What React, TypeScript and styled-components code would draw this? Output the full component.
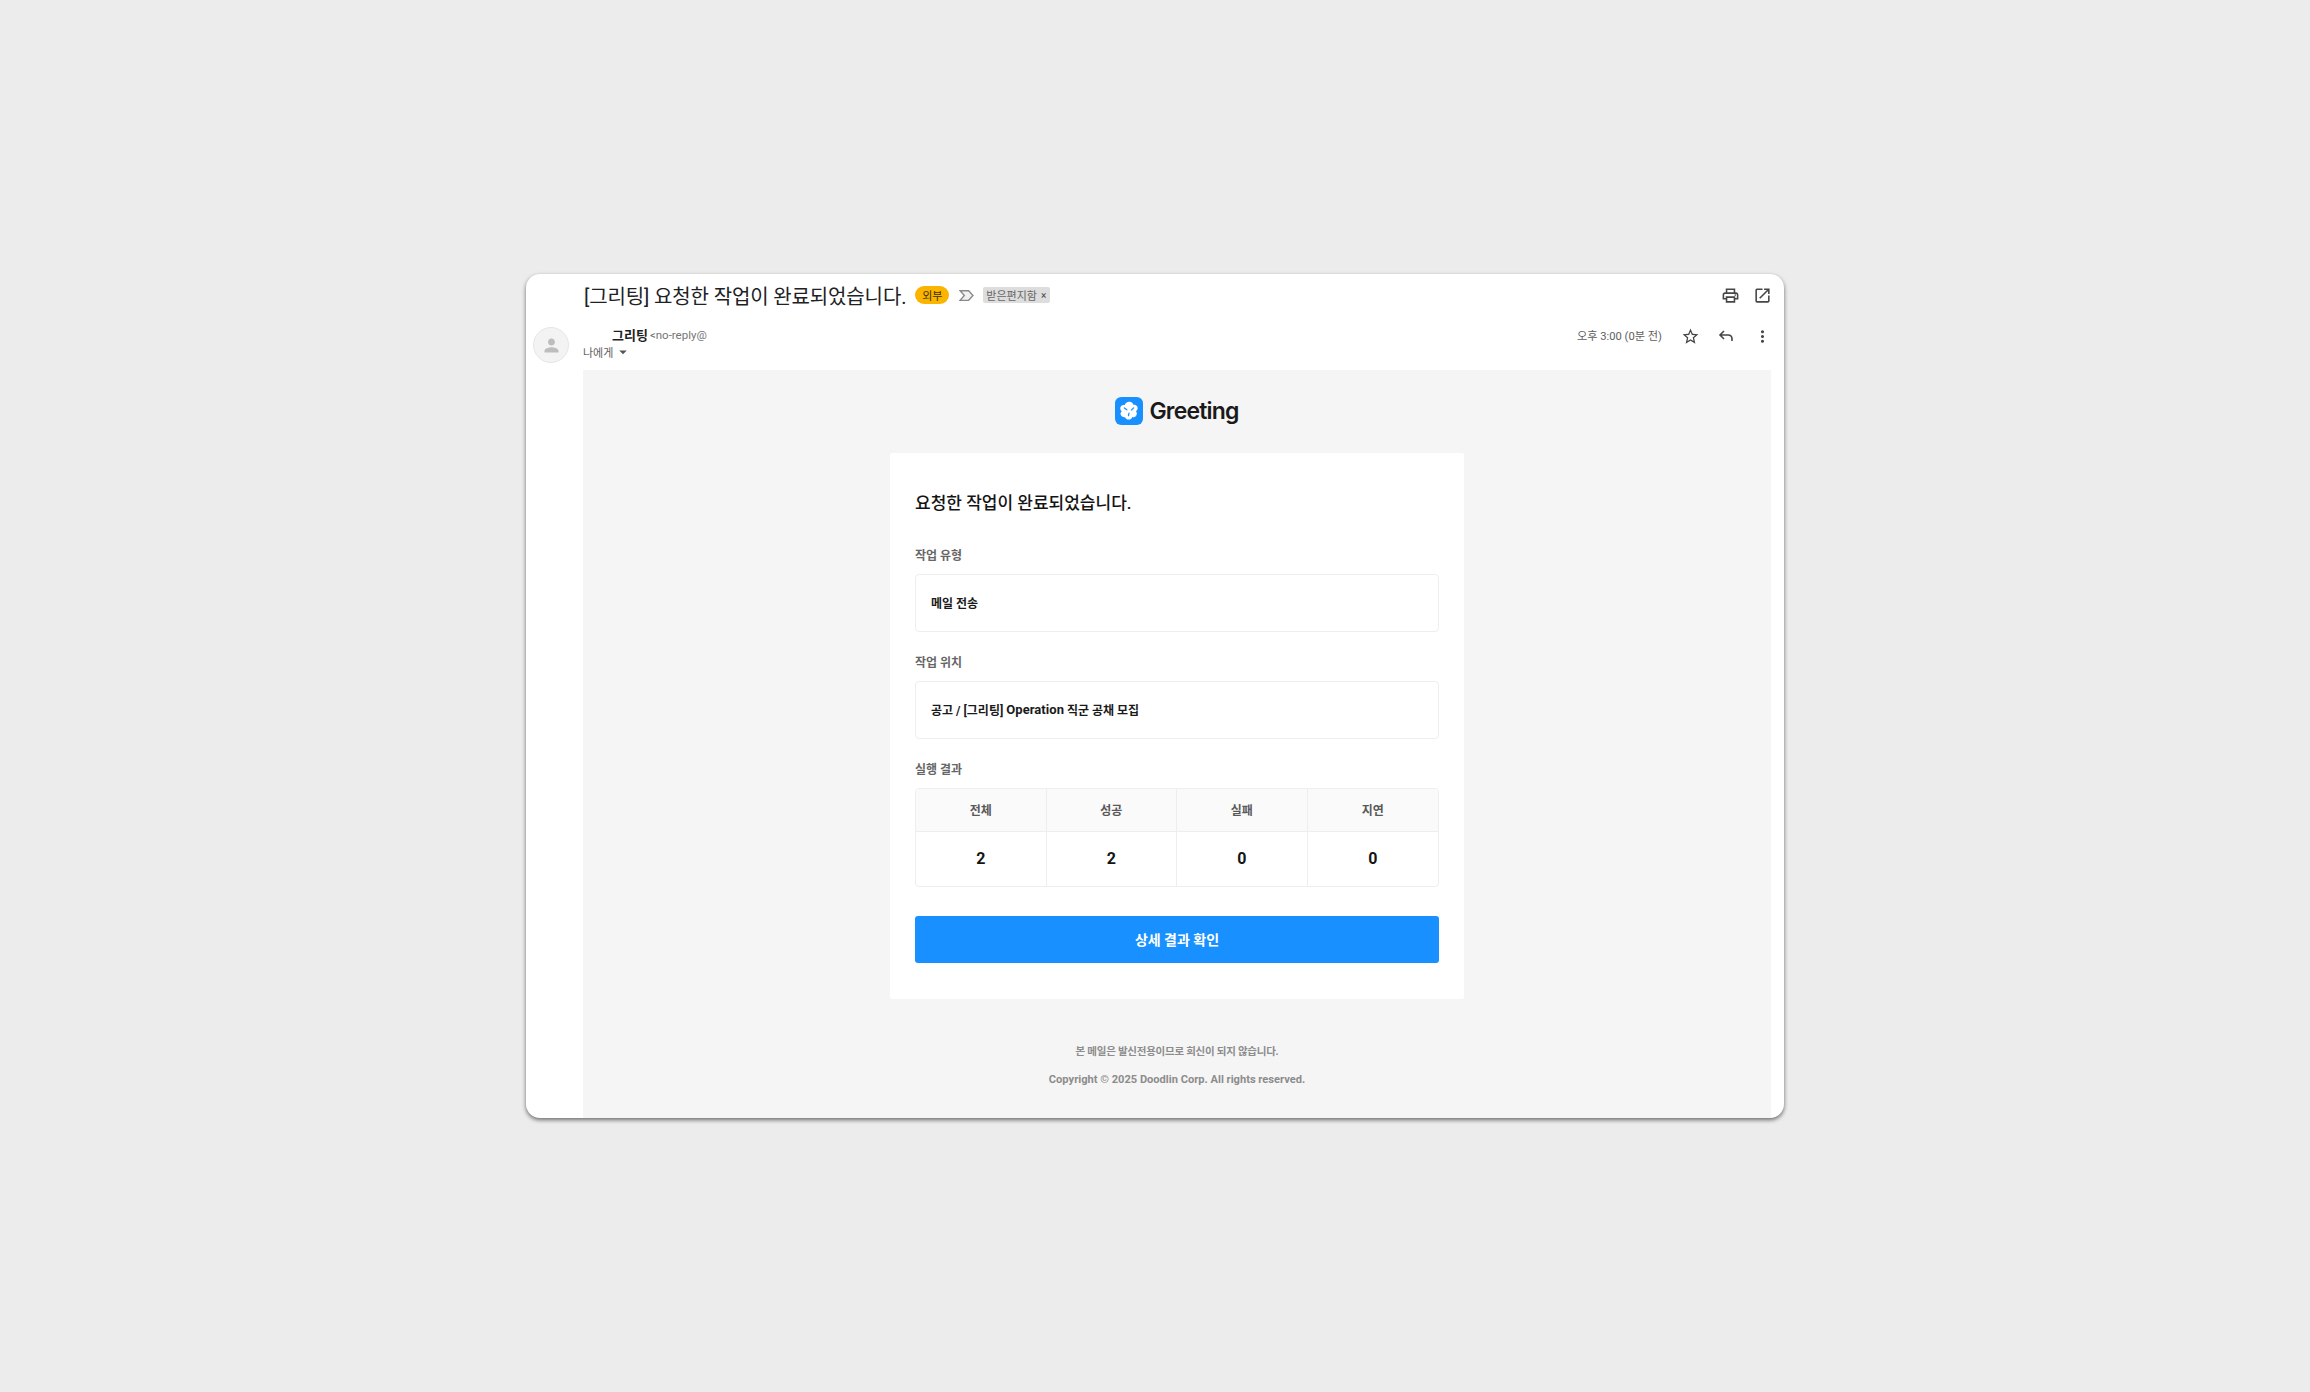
import React from "react";
import styled, { createGlobalStyle } from "styled-components";
import { MdOutlinePrint, MdOpenInNew, MdStarBorder, MdMoreVert, MdArrowDropDown, MdPerson } from "react-icons/md";

const Global = createGlobalStyle`
  html, body { margin: 0; padding: 0; }
  body { background: #ececec; font-family: Roboto, "Noto Sans CJK KR", sans-serif; }
  * { box-sizing: border-box; }
`;

const Page = styled.div`
  width: 2310px;
  height: 1392px;
  display: flex;
  align-items: center;
  justify-content: center;
  background: #ececec;
`;

const Window = styled.div`
  width: 1258px;
  height: 844px;
  background: #fff;
  border-radius: 14px;
  box-shadow: 0 2px 4px rgba(0, 0, 0, 0.55);
  display: flex;
  flex-direction: column;
  overflow: hidden;
`;

const TitleRow = styled.div`
  height: 42px;
  flex: none;
  display: flex;
  align-items: center;
  padding: 0 11px 0 58px;
`;

const Subject = styled.h1`
  margin: 0;
  font-size: 20px;
  letter-spacing: -0.13px;
  font-weight: 400;
  color: #202124;
  white-space: nowrap;
`;

const ExternalBadge = styled.span`
  width: 34px;
  height: 18px;
  margin-left: 9px;
  border-radius: 9px;
  background: #fbb500;
  color: #3c3000;
  font-size: 11px;
  display: flex;
  align-items: center;
  justify-content: center;
`;

const MarkerIcon = styled.svg`
  width: 15px;
  height: 15px;
  margin-left: 10px;
  flex: none;
`;

const Chip = styled.span`
  height: 16px;
  margin-left: 9px;
  padding: 0 4px 0 3px;
  border-radius: 2px;
  background: #dddddd;
  color: #666;
  font-size: 11px;
  display: flex;
  align-items: center;
  gap: 4px;
  white-space: nowrap;
`;

const ChipClose = styled.span`
  font-size: 10px;
  color: #444;
`;

const Spacer = styled.div`
  flex: 1;
`;

const IconGroup = styled.div<{ $gap: number }>`
  display: flex;
  align-items: center;
  gap: ${(p) => p.$gap}px;
  color: #444746;
  font-size: 19px;
`;

const TitleIcons = styled(IconGroup)`
  padding-top: 1px;
`;

const IconCell = styled.span<{ $w: number }>`
  width: ${(p) => p.$w}px;
  display: flex;
  justify-content: center;
`;

const Body = styled.div`
  flex: 1;
  min-height: 0;
  display: flex;
`;

const AvatarColumn = styled.div`
  width: 57px;
  flex: none;
  padding: 11px 0 0 7px;
`;

const Avatar = styled.div`
  width: 36px;
  height: 36px;
  border-radius: 50%;
  background: #f3f3f3;
  border: 1px solid #e6e6e6;
  color: #bdbdbd;
  font-size: 21px;
  display: flex;
  align-items: center;
  justify-content: center;
`;

const MainColumn = styled.div`
  flex: 1;
  min-width: 0;
  margin-right: 13px;
  display: flex;
  flex-direction: column;
`;

const SenderRow = styled.div`
  height: 54px;
  flex: none;
  display: flex;
  align-items: flex-start;
`;

const SenderInfo = styled.div`
  display: flex;
  flex-direction: column;
  padding-top: 10px;
`;

const SenderLine = styled.div`
  height: 16px;
  padding-left: 29px;
  display: flex;
  align-items: center;
  gap: 2px;
`;

const SenderName = styled.span`
  font-size: 13px;
  font-weight: 700;
  color: #1f1f1f;
`;

const SenderAddress = styled.span`
  font-size: 11.5px;
  padding-top: 1px;
  color: #757575;
`;

const RecipientLine = styled.div`
  height: 16px;
  margin-top: 2px;
  display: flex;
  align-items: center;
  font-size: 11px;
  color: #5e5e5e;
`;

const Caret = styled.span`
  margin-left: 1px;
  font-size: 18px;
  display: flex;
  color: #555;
`;

const TimeRow = styled.div`
  margin-left: auto;
  padding-top: 4px;
  display: flex;
  align-items: center;
  height: 36px;
  margin-right: -2px;
`;

const TimeText = styled.span`
  font-size: 11.2px;
  color: #5e5e5e;
  margin-right: 17px;
  padding-bottom: 3px;
`;

const Panel = styled.div`
  flex: 1;
  min-height: 0;
  background: #f5f5f5;
  padding-top: 27px;
  display: flex;
  flex-direction: column;
  align-items: center;
`;

const Logo = styled.div`
  height: 28px;
  margin-bottom: -1px;
  display: flex;
  align-items: center;
  gap: 6px;
`;

const LogoText = styled.span`
  font-family: Inter, sans-serif;
  font-size: 23px;
  font-weight: 600;
  letter-spacing: -0.8px;
  color: #1a1a1a;
`;

const Card = styled.div`
  width: 574px;
  margin-top: 29px;
  padding: 38px 25px 36px;
  background: #fff;
  border-radius: 2px;
  display: flex;
  flex-direction: column;
`;

const Heading = styled.h2`
  margin: 0;
  font-size: 17px;
  line-height: 24px;
  font-weight: 500;
  color: #141414;
`;

const FieldLabel = styled.div<{ $top: number }>`
  margin-top: ${(p) => p.$top}px;
  height: 16px;
  padding-top: 1px;
  font-size: 12px;
  line-height: 16px;
  font-weight: 700;
  color: #666;
`;

const ValueBox = styled.div`
  margin-top: 11px;
  height: 58px;
  padding: 0 15px 2px;
  border: 1px solid #eeeeee;
  border-radius: 4px;
  display: flex;
  align-items: center;
  white-space: pre;
  font-size: 12px;
  font-weight: 700;
  color: #1a1a1a;
`;

const LatinRun = styled.span`
  font-size: 13px;
  letter-spacing: 0.05px;
`;

const ResultTable = styled.div`
  margin-top: 11px;
  height: 99px;
  border: 1px solid #eeeeee;
  border-radius: 4px;
  display: grid;
  grid-template-columns: repeat(4, 1fr);
  grid-template-rows: 43px 1fr;
  overflow: hidden;
`;

const HeadCell = styled.div<{ $last: boolean }>`
  background: #fafafa;
  border-bottom: 1px solid #eeeeee;
  border-right: ${(p) => (p.$last ? "0" : "1px solid #eeeeee")};
  padding-bottom: 2px;
  display: flex;
  align-items: center;
  justify-content: center;
  font-size: 12px;
  font-weight: 700;
  color: #595959;
`;

const ValueCell = styled.div<{ $last: boolean }>`
  border-right: ${(p) => (p.$last ? "0" : "1px solid #eeeeee")};
  padding-bottom: 1px;
  display: flex;
  align-items: center;
  justify-content: center;
  font-size: 16px;
  font-weight: 700;
  color: #141414;
`;

const ActionButton = styled.a`
  margin-top: 29px;
  height: 47px;
  padding-bottom: 2px;
  background: #1890ff;
  border-radius: 3px;
  color: #fff;
  font-size: 14px;
  font-weight: 700;
  display: flex;
  align-items: center;
  justify-content: center;
`;

const FooterNote = styled.div`
  margin-top: 45px;
  font-size: 10.5px;
  letter-spacing: -0.25px;
  line-height: 16px;
  font-weight: 700;
  color: #8c8c8c;
`;

const FooterCopy = styled.div`
  margin-top: 12px;
  font-size: 11.1px;
  line-height: 16px;
  font-weight: 700;
  color: #8c8c8c;
`;

const heads = ["전체", "성공", "실패", "지연"];
const values = [2, 2, 0, 0];

const ReplyIcon = () => (
  <svg width="18" height="18" viewBox="0 0 18 18" fill="none" stroke="currentColor" strokeWidth="1.6">
    <path d="M7 4 L3 8 L7 12 M3 8 H11 Q15 8 15 12 V14" />
  </svg>
);

const GreetingMark = () => (
  <svg width="28" height="28" viewBox="0 0 27 27">
    <rect width="27" height="27" rx="6" fill="#1890ff" />
    <path
      d="M13.2 4.6c2.4-.5 4.2 1 4.6 2.9 2.4-.3 4.5 1.5 4 3.9-.2 1.1-.8 1.9-1.6 2.4 1.1 1.2 1.1 3 .2 4.2-.9 1.2-2.3 1.7-3.6 1.3-.6 1.6-2.1 2.6-3.7 2.5-1.5 0-2.8-.9-3.4-2.3-1.8.3-3.6-.6-4.2-2.3-.4-1.3 0-2.7 1-3.5-1.5-1.2-1.9-3.1-.9-4.6 1-1.3 2.5-1.7 3.8-1.4.3-1.3 1.6-2.6 3.8-3.1z"
      fill="#fff"
    />
    <path d="M9 10.5l2.4 1.8M18 10.5l-2.2 2M13 18l.5-2.4" stroke="#1890ff" strokeWidth="1.2" fill="none" strokeLinecap="round" />
  </svg>
);

export default function App() {
  return (
    <Page>
      <Global />
      <Window>
        <TitleRow>
          <Subject>[그리팅] 요청한 작업이 완료되었습니다.</Subject>
          <ExternalBadge>외부</ExternalBadge>
          <MarkerIcon viewBox="0 0 14 14" fill="#f1f1f1" stroke="#8a8a8a" strokeWidth="1.3">
            <path d="M1 2.5 H9 L13 7 L9 11.5 H1 L5 7 Z" />
          </MarkerIcon>
          <Chip>
            받은편지함
            <ChipClose>×</ChipClose>
          </Chip>
          <Spacer />
          <TitleIcons $gap={10}>
            <IconCell $w={22}><MdOutlinePrint /></IconCell>
            <IconCell $w={22}><MdOpenInNew /></IconCell>
          </TitleIcons>
        </TitleRow>
        <Body>
          <AvatarColumn>
            <Avatar><MdPerson /></Avatar>
          </AvatarColumn>
          <MainColumn>
            <SenderRow>
              <SenderInfo>
                <SenderLine>
                  <SenderName>그리팅</SenderName>
                  <SenderAddress>&lt;no-reply@</SenderAddress>
                </SenderLine>
                <RecipientLine>
                  나에게
                  <Caret><MdArrowDropDown /></Caret>
                </RecipientLine>
              </SenderInfo>
              <TimeRow>
                <TimeText>오후 3:00 (0분 전)</TimeText>
                <IconGroup $gap={14}>
                  <IconCell $w={22}><MdStarBorder /></IconCell>
                  <IconCell $w={22}><ReplyIcon /></IconCell>
                  <IconCell $w={22}><MdMoreVert /></IconCell>
                </IconGroup>
              </TimeRow>
            </SenderRow>
            <Panel>
              <Logo>
                <GreetingMark />
                <LogoText>Greeting</LogoText>
              </Logo>
              <Card>
                <Heading>요청한 작업이 완료되었습니다.</Heading>
                <FieldLabel $top={32}>작업 유형</FieldLabel>
                <ValueBox>메일 전송</ValueBox>
                <FieldLabel $top={22}>작업 위치</FieldLabel>
                <ValueBox>공고 / [그리팅] <LatinRun>Operation</LatinRun> 직군 공채 모집</ValueBox>
                <FieldLabel $top={22}>실행 결과</FieldLabel>
                <ResultTable>
                  {heads.map((h, i) => (
                    <HeadCell key={h} $last={i === 3}>{h}</HeadCell>
                  ))}
                  {values.map((v, i) => (
                    <ValueCell key={i} $last={i === 3}>{v}</ValueCell>
                  ))}
                </ResultTable>
                <ActionButton>상세 결과 확인</ActionButton>
              </Card>
              <FooterNote>본 메일은 발신전용이므로 회신이 되지 않습니다.</FooterNote>
              <FooterCopy>Copyright © 2025 Doodlin Corp. All rights reserved.</FooterCopy>
            </Panel>
          </MainColumn>
        </Body>
      </Window>
    </Page>
  );
}
